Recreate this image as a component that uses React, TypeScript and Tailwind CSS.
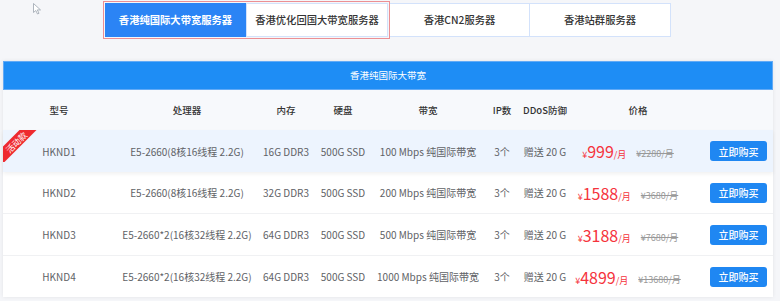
const font = {
  fontFamily: '"Noto Sans CJK SC", "Noto Sans", sans-serif',
};

const rows = [
  {
    name: "HKND1",
    cpu: "E5-2660(8核16线程 2.2G)",
    ram: "16G DDR3",
    bw: "100 Mbps 纯国际带宽",
    price: "999",
    old: "¥2280/月",
    hot: true,
  },
  {
    name: "HKND2",
    cpu: "E5-2660(8核16线程 2.2G)",
    ram: "32G DDR3",
    bw: "200 Mbps 纯国际带宽",
    price: "1588",
    old: "¥3680/月",
  },
  {
    name: "HKND3",
    cpu: "E5-2660*2(16核32线程 2.2G)",
    ram: "64G DDR3",
    bw: "500 Mbps 纯国际带宽",
    price: "3188",
    old: "¥7680/月",
  },
  {
    name: "HKND4",
    cpu: "E5-2660*2(16核32线程 2.2G)",
    ram: "64G DDR3",
    bw: "1000 Mbps 纯国际带宽",
    price: "4899",
    old: "¥13680/月",
  },
];

export default function App() {
  return (
    <div className="relative w-[780px] h-[301px] overflow-hidden bg-[#f5f6f9]" style={font}>
      {/* mouse pointer */}
      <svg className="absolute left-[33px] top-[3px]" width="9" height="12" viewBox="0 0 9 12">
        <path d="M0.5 0.5 L0.5 9.5 L2.8 7.5 L4.5 11 L6 10.3 L4.3 6.9 L7.5 6.9 Z" fill="#fff" stroke="#9aa3ad" strokeWidth="0.8" />
      </svg>

      <div className="flex pl-[103px] pt-[1px]">
        <div className="flex border border-[#ec8f93] p-[1px]">
          <div className="w-[141px] h-[34px] flex items-center justify-center bg-[#2b84f5] text-white text-[10.3px] font-bold whitespace-nowrap">
            香港纯国际大带宽服务器
          </div>
          <div className="w-[142px] h-[34px] flex items-center justify-center bg-white border border-[#d3e2fb] text-[#333] text-[10.3px] font-medium whitespace-nowrap">
            香港优化回国大带宽服务器
          </div>
        </div>
        <div className="mt-[2px] w-[140px] h-[34px] flex items-center justify-center bg-white border border-[#d3e2fb] border-l-0 text-[#333] text-[10.3px] font-medium whitespace-nowrap">
          香港CN2服务器
        </div>
        <div className="mt-[2px] w-[141px] h-[34px] flex items-center justify-center bg-white border border-[#d3e2fb] border-l-0 text-[#333] text-[10.3px] font-medium whitespace-nowrap">
          香港站群服务器
        </div>
      </div>

      <div className="ml-[3px] mt-[22px] w-[770px] bg-white shadow-[0_0_4px_rgba(0,0,0,0.08)]">
        <div className="h-[29px] flex items-center justify-center bg-[#1e8df5] border border-[#62aaf6] text-white text-[9.5px]">
          香港纯国际大带宽
        </div>

        <div className="flex h-[40px] items-center bg-[#f7f9fc] text-[9.5px] text-[#333] font-medium">
          <div className="w-[112px] text-center">型号</div>
          <div className="w-[144px] text-center">处理器</div>
          <div className="w-[54px] text-center">内存</div>
          <div className="w-[60px] text-center">硬盘</div>
          <div className="w-[110px] text-center">带宽</div>
          <div className="w-[38px] text-center">IP数</div>
          <div className="w-[48px] text-center whitespace-nowrap">DDoS防御</div>
          <div className="w-[138px] text-center">价格</div>
          <div className="w-[66px]"></div>
        </div>

        {rows.map((r, i) => (
          <div
            key={r.name}
            className={
              r.hot
                ? "relative flex h-[42px] items-center bg-[#edf4fe] text-[10px] text-[#606266] shadow-[0_2px_4px_rgba(0,0,0,0.06)]"
                : i === rows.length - 1
                ? "relative flex h-[41px] items-center text-[10px] text-[#606266]"
                : "relative flex h-[42px] items-center border-b border-[#f0f1f3] text-[10px] text-[#606266]"
            }
          >
            {r.hot && (
              <div className="absolute left-0 top-0 w-[34px] h-[32px] overflow-hidden">
                <div className="absolute left-[-14px] top-[6px] w-[54px] h-[12px] -rotate-45 bg-[#ee2a2f] flex items-center justify-center text-white text-[8.5px] leading-none">
                  活动款
                </div>
              </div>
            )}
            <div className="w-[112px] text-center whitespace-nowrap">{r.name}</div>
            <div className="w-[144px] text-center whitespace-nowrap">{r.cpu}</div>
            <div className="w-[54px] text-center whitespace-nowrap">{r.ram}</div>
            <div className="w-[60px] text-center whitespace-nowrap">500G SSD</div>
            <div className="w-[110px] text-center whitespace-nowrap">{r.bw}</div>
            <div className="w-[38px] text-center">3个</div>
            <div className="w-[48px] text-center whitespace-nowrap">赠送 20 G</div>
            <div className="w-[138px] pr-[20px] flex items-end justify-center whitespace-nowrap">
              <span className="text-[#f5333c] leading-none">
                <span className="text-[9px]">¥</span>
                <span className="text-[16px]">{r.price}</span>
                <span className="text-[9px]">/月</span>
              </span>
              <span className="ml-[10px] mb-[1px] text-[9px] text-[#999] line-through leading-none">{r.old}</span>
            </div>
            <div className="w-[66px] flex justify-start pl-[3px]">
              <button className="w-[57px] h-[20px] rounded-[3px] bg-[#1f87f2] text-white text-[10px] font-medium">
                立即购买
              </button>
            </div>
          </div>
        ))}
      </div>
    </div>
  );
}
